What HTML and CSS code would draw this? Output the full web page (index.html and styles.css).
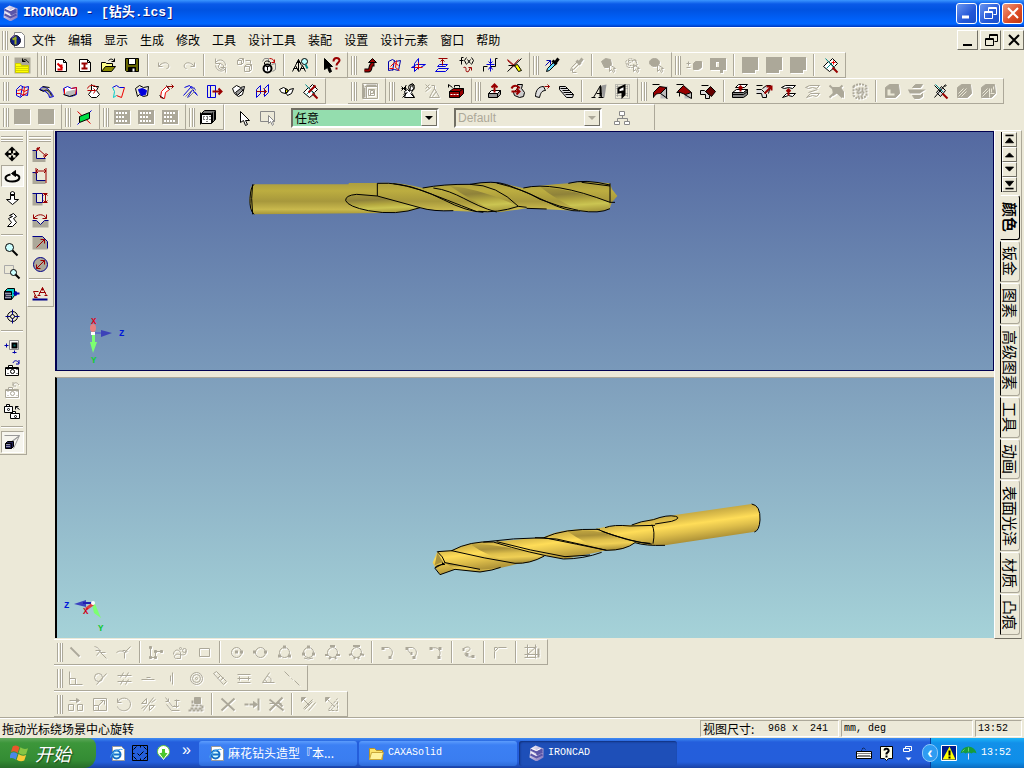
FILE: index.html
```html
<!DOCTYPE html>
<html lang="zh-CN">
<head>
<meta charset="utf-8">
<title>IRONCAD - [钻头.ics]</title>
<link rel="stylesheet" href="styles.css">
</head>
<body>
<svg class="defs" aria-hidden="true">
  <defs>
    <linearGradient id="cube" x1="0" y1="0" x2="1" y2="1"><stop offset="0" stop-color="#fff"/><stop offset="1" stop-color="#7868b8"/></linearGradient>
    <symbol id="logo" viewBox="-.5 -.5 16 16"><path stroke="none" fill="url(#cube)" d="M7 0l8 3v9l-7 4-7-4 1-9z"/><path stroke="#5a55a8" stroke-width="2" d="M2 4l6 3 6-3M8 9l6-3M2 9l6 3 6-3"/><path stroke="#fff" d="M3 3l5 2 4-2M3 7l5 3"/></symbol>
    <symbol id="ie" viewBox="-.5 -.5 16 16"><path stroke="#999" fill="#fff" d="M3 1h9l3 3v11H3z"/><circle cx="7" cy="9" r="4" stroke="#1670c8" stroke-width="2" fill="#dff"/><path stroke="#1670c8" stroke-width="2" d="M4 9h7"/><path stroke="#49a8ef" d="M1 12C2 7 8 3 13 4"/></symbol>
    <symbol id="solid" viewBox="0 0 16 16"><path fill="currentColor" stroke="none" d="M0 0h16v13h-3v3H0z"/></symbol>
    <symbol id="grid" viewBox="0 0 16 16"><path fill="currentColor" stroke="none" d="M0 1h16v14H0z"/><path stroke="#fff" stroke-width="2" stroke-dasharray="2 1" d="M2 4h12M2 8h9M2 12h12"/></symbol>
    <symbol id="camera" viewBox="-.5 -.5 16 16"><path fill="#fff" d="M1 7h13v8H1zM4 7V5h4v2"/><circle cx="8" cy="11" r="2"/><path d="M3 9h1M12 9h1M3 13h1M12 13h1M1 8h13"/></symbol>
    <symbol id="block" viewBox="-.5 -.5 16 16"><path fill="#aca899" stroke="none" d="M0 4h4v8h9v4H0z"/><path stroke="#000080" d="M0 4h4v8h9"/></symbol>
    <symbol id="circle" viewBox="-.5 -.5 16 16"><circle cx="8" cy="8" r="5"/></symbol>
  </defs>
</svg>
<div class="window">
  <header class="titlebar">
    <svg class="i"><use href="#logo"/></svg>
    <h1>IRONCAD - [钻头.ics]</h1>
    <div class="winbtns">
      <button aria-label="最小化"><svg class="i" viewBox="0 0 16 16"><path stroke-width="3" d="M3 12h7"/></svg></button>
      <button aria-label="还原"><svg class="i" viewBox="-.5 -.5 16 16"><path d="M6 6V2h8v7h-3M6 3h8M2 6h8v7H2zM2 7h8"/></svg></button>
      <button class="close" aria-label="关闭"><svg class="i" viewBox="0 0 16 16"><path stroke-width="2" d="M3 3l10 10M13 3L3 13"/></svg></button>
    </div>
  </header>
  <nav class="menubar">
    <i class="grip"></i>
    <svg class="i doc" viewBox="-.5 -.5 16 16"><path fill="#fff" stroke="#888" d="M5 0h7l3 3v12H5z"/><circle cx="6" cy="8" r="5" fill="#0c1a80" stroke="#112"/><path stroke="#9a2" stroke-width="2" d="M6 4v8M3 7l4-2"/><path stroke="#a8d" d="M2 5l3-2"/></svg>
    <button>文件</button><button>编辑</button><button>显示</button><button>生成</button><button>修改</button><button>工具</button><button>设计工具</button><button>装配</button><button>设置</button><button>设计元素</button><button>窗口</button><button>帮助</button>
    <div class="mdibtns">
      <button aria-label="最小化窗口"><svg class="i" viewBox="0 0 16 16"><path stroke-width="2" d="M3 13h9"/></svg></button>
      <button aria-label="还原窗口"><svg class="i" viewBox="-.5 -.5 16 16"><path d="M6 6V2h8v7h-3M6 3h8M2 6h8v7H2zM2 7h8"/></svg></button>
      <button aria-label="关闭窗口"><svg class="i" viewBox="0 0 16 16"><path stroke-width="2" d="M3 3l10 10M13 3L3 13"/></svg></button>
    </div>
  </nav>

  <div class="row">
    <div class="tb"><i class="grip"></i>
      <button aria-label="场景"><svg class="i" viewBox="-.5 -.5 16 16"><path stroke="none" fill="#aca899" d="M0 0h16v16H0z"/><path stroke="#cc0" fill="#ff0" d="M1 6h5l1 2h7v7H1z"/><path stroke="#aa0" stroke-dasharray="1 1" d="M2 9h11M2 11h11M2 13h11"/><path d="M8 4c2-3 4-2 6 1M8 1v3h3"/></svg></button>
    </div>
    <div class="tb"><i class="grip"></i>
      <button aria-label="新建"><svg class="i" viewBox="-.5 -.5 16 16"><path fill="#fff" d="M3 2h8l3 3v9H3zM11 2v3h3"/><path stroke="#d00" stroke-width="2" d="M5 6l5 5M9 7v5H5"/></svg></button>
      <button aria-label="新建图纸"><svg class="i" viewBox="-.5 -.5 16 16"><path fill="#fff" d="M3 2h8l3 3v9H3zM11 2v3h3"/><path stroke="#900" stroke-width="2" d="M5 6h6M5 11h6M8 6v5"/></svg></button>
      <button aria-label="打开"><svg class="i" viewBox="-.5 -.5 16 16"><path fill="#ff8" d="M1 14V5h4l1 1h6v3"/><path fill="#880" d="M1 14l4-5h10l-4 5z"/><path d="M8 3c2-2 4-2 6 1M14 1v3h-3"/></svg></button>
      <button aria-label="保存"><svg class="i" viewBox="-.5 -.5 16 16"><path fill="#660" d="M1 1h13v13H2l-1-1z"/><path fill="#fff" d="M4 1h7v6H4z"/><path fill="#000" d="M4 10h7v4H4z"/><path stroke="#fff" stroke-width="2" d="M9 11v3"/></svg></button>
      <i class="sep"></i>
      <button disabled aria-label="撤消"><svg class="i" viewBox="-.5 -.5 16 16"><path d="M2 5v4h4M2 9c3-4 8-5 10-2 1 2 0 4-2 4"/></svg></button>
      <button disabled aria-label="重做"><svg class="i" viewBox="-.5 -.5 16 16"><path d="M14 5v4h-4M14 9C11 5 6 4 4 7c-1 2 0 4 2 4"/></svg></button>
      <i class="sep"></i>
      <button disabled aria-label="更新"><svg class="i" viewBox="-.5 -.5 16 16"><path d="M3 1v5h5M3 5c4-5 10-2 10 3M13 15v-5H8M13 11c-4 5-9 2-10-3M6 8l2-2 3 2v3l-3 1-2-2z"/></svg></button>
      <button disabled aria-label="复制"><svg class="i" viewBox="-.5 -.5 16 16"><path d="M1 3l2-2h4v4L5 7H1zM1 3h4v4M5 3l2-2M8 9l2-2h5v5l-2 2H8zM8 9h5v5M13 9l2-2M9 3h5v3"/></svg></button>
      <button aria-label="锁定"><svg class="i" viewBox="-.5 -.5 16 16"><path stroke="#888" d="M2 4l2-3h4v4M11 7l4-1v6l-3 2"/><circle cx="7" cy="11" r="4" fill="#fff" stroke-width="2"/><path d="M4 7V5c1-2 4-2 6 0v2M7 9v4M5 9h4"/><path stroke="#b00" d="M9 1c3 0 4 1 5 4M11 5h3V2"/></svg></button>
      <i class="sep"></i>
      <button aria-label="查找"><svg class="i" viewBox="-.5 -.5 16 16"><path d="M0 14l3-6 3 6M1 11h4M7 14l3-6 3 6M8 11h4M3 8l3-6 3 6M4 5h4M6 2v12"/><circle cx="12" cy="4" r="3" fill="#bff"/><path stroke="#088" stroke-width="2" d="M13 7l2 4"/></svg></button>
      <i class="sep"></i>
      <button aria-label="帮助"><svg class="i" viewBox="-.5 -.5 16 16"><path fill="#000" d="M0 1l8 8H5l2 5-2 1-2-5-3 2z"/><path stroke="#900" stroke-width="2" d="M9 4c0-5 6-4 6-1 0 2-3 2-3 5M12 10v2"/></svg></button>
    </div>
    <div class="tb"><i class="grip"></i>
      <button aria-label="路径"><svg class="i" viewBox="-.5 -.5 16 16"><path stroke-width="4" d="M2 13h4c3 0 1-6 4-6V4"/><path stroke="#900" stroke-width="2" d="M2 13h4c3 0 1-6 4-6V4"/><path fill="#900" d="M6 5l4-4 4 4z"/></svg></button>
      <button aria-label="草图"><svg class="i" viewBox="-.5 -.5 16 16"><path stroke="#00a" d="M2 4l4-2 3 2 5-1-2 10-4-1-6 1zM8 3L6 13"/><path stroke="#e00" d="M4 9l4-4 4 3M10 3l-1 7 4 3M3 11h4"/></svg></button>
      <button aria-label="三维参考"><svg class="i" viewBox="-.5 -.5 16 16"><path stroke="#00d" d="M1 10l5-3h9l-5 3zM8 1v9l-4 4V6z"/><path stroke="#d00" d="M4 10h8M8 5v7"/></svg></button>
      <button aria-label="偏移"><svg class="i" viewBox="-.5 -.5 16 16"><path stroke="#00d" d="M1 14l3-3h10l-3 3zM3 9l2-2h8l-2 2z"/><path stroke="#900" d="M4 1h9M8 2v6M6 4l2-2 2 2"/></svg></button>
      <button aria-label="函数"><svg class="i" viewBox="-.5 -.5 16 16"><path d="M5 0H3v7M1 3h4M8 0L6 3l2 4M9 2l3 4M12 2L9 6M13 0l2 3-2 4"/><path stroke="#900" d="M5 10c5-2 0 6 5 4l2-4M10 10h3v3"/></svg></button>
      <button aria-label="拟合"><svg class="i" viewBox="-.5 -.5 16 16"><path d="M1 14V9h4M8 9h5V1h2"/><path stroke="#00d" d="M8 1v13M4 7h8M6 4l2 2 2-2M6 12l2-3 2 3"/></svg></button>
      <button aria-label="修剪"><svg class="i" viewBox="-.5 -.5 16 16"><path stroke="#900" d="M1 2l8 7M12 2L4 11M1 3l7 6"/><path d="M1 14L15 1M2 8h9"/><path fill="#ff0" d="M8 8l3-1 4 6-3 1z"/></svg></button>
    </div>
    <div class="tb"><i class="grip"></i>
      <button aria-label="吸管"><svg class="i" viewBox="-.5 -.5 16 16"><path fill="#6df" d="M2 14l1-3 6-6 2 2-6 6z"/><path stroke-width="3" d="M8 3l4 4M11 5l3-4"/><path stroke="#00a" d="M2 3h4v4M6 3L1 8"/></svg></button>
      <button disabled aria-label="填充"><svg class="i" viewBox="-.5 -.5 16 16"><path d="M2 13l1-3 6-6 2 2-6 6z"/><path stroke-width="3" d="M8 3l4 4M11 5l3-4"/><path d="M4 11v4h4"/></svg></button>
      <i class="sep"></i>
      <button disabled aria-label="选择零件"><svg class="i" viewBox="-.5 -.5 16 16"><path fill="currentColor" d="M1 4l4-3 5 1 1 5-3 3H4z"/><path d="M9 7v7l2-2 2 3 1-1-1-3h2z"/></svg></button>
      <button disabled aria-label="选择组件"><svg class="i" viewBox="-.5 -.5 16 16"><path stroke-dasharray="2 1" d="M1 4l4-3 5 1 3 5-5 3H3zM4 3h8v5H4zM2 7l9-5"/><path d="M9 7v7l2-2 2 3 1-1-1-3h2z"/></svg></button>
      <button disabled aria-label="选择面"><svg class="i" viewBox="-.5 -.5 16 16"><ellipse cx="6" cy="5" rx="5" ry="4" fill="currentColor"/><path d="M9 7v7l2-2 2 3 1-1-1-3h2z"/></svg></button>
    </div>
    <div class="tb"><i class="grip"></i>
      <button disabled aria-label="加减"><svg class="i" viewBox="-.5 -.5 16 16"><path d="M0 6h4M2 4v4M0 10h4"/><path fill="currentColor" d="M7 6l2-2h6v6l-3 2H7z"/></svg></button>
      <button disabled aria-label="空心"><svg class="i" viewBox="0 0 16 16"><path fill="currentColor" stroke="none" fill-rule="evenodd" d="M0 1h16v12h-3v3h-3v-3H0zM6 5v5h3V5z"/></svg></button>
      <i class="sep"></i>
      <button disabled aria-label="合并"><svg class="i"><use href="#solid"/></svg></button>
      <button disabled aria-label="求差"><svg class="i"><use href="#solid"/></svg></button>
      <button disabled aria-label="求交"><svg class="i"><use href="#solid"/></svg></button>
      <i class="sep"></i>
      <button aria-label="编辑面"><svg class="i" viewBox="-.5 -.5 16 16"><path fill="#fff" d="M1 9l5-5 6 6-5 4zM7 4l3-3 5 5-3 3"/><path stroke="#088" d="M3 1l11 12M4 11l6-6"/><path stroke="#900" stroke-width="2" d="M10 10l5 5"/><path stroke="#e00" d="M11 3v4M9 5h4"/></svg></button>
    </div>
  </div>

  <div class="row">
    <div class="tb"><i class="grip"></i>
      <button aria-label="网格面"><svg class="i" viewBox="-.5 -.5 16 16"><path stroke="#00d" d="M2 6l4-4 4 2 4-1-1 9-4-1-3 3-4-2zM8 3L6 13"/><path stroke="#e00" d="M3 7l4-1 3 2 4-2M2 10h4l3 2 4-3M10 3L9 12"/></svg></button>
      <button aria-label="放样面"><svg class="i" viewBox="-.5 -.5 16 16"><path fill="#aca899" stroke="#00d" d="M1 6c3-4 8-4 14 7l-4 1C10 9 6 7 1 6z"/><path d="M1 6l4 2c3-3 6-1 8 4M4 3l7 1"/></svg></button>
      <button aria-label="直纹面"><svg class="i" viewBox="-.5 -.5 16 16"><path fill="#fff" stroke="#00d" d="M1 5l4-2 4 2 5-1v7l-5 2-7-2z"/><path fill="#bbb" stroke="none" d="M4 8l9-2v5l-4 2-7-2z"/><path stroke="#e00" d="M9 5l5-1-1 7M2 5v6"/><path d="M1 11l6 2 6-2"/></svg></button>
      <button aria-label="旋转面"><svg class="i" viewBox="-.5 -.5 16 16"><path fill="#fff" d="M5 1l2 2h5l-2 4 3 4-3 3H5l-3-3 3-4z"/><path stroke="#b00" d="M1 5c1-4 8-4 9-1M1 7h8M7 5l2 2-2 3"/></svg></button>
      <button aria-label="填充面"><svg class="i" viewBox="-.5 -.5 16 16"><path stroke="#00d" d="M2 4l4-2 3 2h5"/><path stroke="#e00" d="M14 4l-3 10-5-2"/><path stroke="#0cc" d="M6 12l-3 2 1-6-2-4"/></svg></button>
      <button aria-label="修补面"><svg class="i" viewBox="-.5 -.5 16 16"><path d="M1 5l4-3 4 2 5-1-1 9-4 1-4-2-2 2z"/><path fill="#00d" stroke="#00d" d="M4 6l4-1 4 2-1 4-4 1-2-3z"/></svg></button>
      <button aria-label="导向面"><svg class="i" viewBox="-.5 -.5 16 16"><path fill="#fff" stroke="#e00" d="M2 14l1-6 5-5 3 3-4 3-1 6z"/><path d="M1 12l4 3M8 2l3 4"/><path stroke="#900" d="M9 3h6M13 1l2 2-2 2"/></svg></button>
      <button aria-label="延伸面"><svg class="i" viewBox="-.5 -.5 16 16"><path stroke="#00d" d="M2 4l5-2 8 10M5 14l5-8 4 5M1 12l8-9 4 3"/><path stroke="#888" d="M3 13l9-9M6 14l7-7"/></svg></button>
      <button aria-label="偏移面"><svg class="i" viewBox="-.5 -.5 16 16"><path stroke="#00d" d="M1 2h8v12H1zM4 2v12"/><path stroke="#900" stroke-width="2" d="M6 8h8M12 5l3 3-3 3"/></svg></button>
      <button aria-label="裁剪面"><svg class="i" viewBox="-.5 -.5 16 16"><path fill="#fff" d="M2 5l4-3 4 2 4-1-2 8-4 2-4-3z"/><path fill="#999" d="M5 9l5-4 3 1-6 6z"/></svg></button>
      <button aria-label="镜像面"><svg class="i" viewBox="-.5 -.5 16 16"><path stroke="#00d" d="M2 14V6l4-4v8zM10 13V5l4-4v8z"/><path stroke="#900" d="M2 8h10M9 5l3 3-3 3"/></svg></button>
      <button aria-label="缝合面"><svg class="i" viewBox="-.5 -.5 16 16"><path fill="#fff" d="M1 6l4-2 4 2-2 4-4-1zM8 10l3-4 4-1-2 5-4 2z"/><path fill="#ff0" d="M7 6l3 1-3 3z"/></svg></button>
      <button aria-label="编辑曲面"><svg class="i" viewBox="-.5 -.5 16 16"><path fill="#fff" d="M1 9l5-5 6 6-5 4zM7 4l3-3 5 5-3 3"/><path stroke="#088" d="M3 1l11 12M4 11l6-6"/><path stroke="#900" stroke-width="2" d="M13 2L6 9M10 10l5 5"/></svg></button>
    </div>
    <div class="tb gap"><i class="grip"></i>
      <button disabled aria-label="参数"><svg class="i" viewBox="-.5 -.5 16 16"><path d="M0 0h15v15H0zM1 1v14M4 2v13M2 3h13M6 6h6v6H6zM8 12V7h3v3H8"/><path stroke-width="2" d="M2 4v10M4 2h10"/></svg></button>
    </div>
    <div class="tb"><i class="grip"></i>
      <button aria-label="设计"><svg class="i" viewBox="-.5 -.5 16 16"><path fill="#fff" d="M4 8l3-2 2 2 1-5 2-1 1 3-2 4 3 5H4l1-3z"/><path d="M1 3l4 4M1 7l5-5M5 2v5M1 5h5M9 2l3-2 2 2M3 11l4-2M10 10l4 4M2 14l4-4"/><circle cx="11" cy="4" r="3"/></svg></button>
      <button disabled aria-label="装配"><svg class="i" viewBox="-.5 -.5 16 16"><path d="M1 1l4 4M1 5l4-4M7 2h3v4M1 8l5-4M10 5l5 9H5l2-4zM8 13l4-5"/></svg></button>
      <button aria-label="工具箱"><svg class="i" viewBox="-.5 -.5 16 16"><path fill="#900" d="M1 8l4-3h10v5l-4 4H1z"/><path d="M1 8h10l4-3M11 8v6M0 1l4 3M0 1v3M6 4V2h5v2"/><path stroke="#fff" stroke-dasharray="2 1" d="M2 11h8"/></svg></button>
    </div>
    <div class="tb"><i class="grip"></i>
      <button aria-label="拉伸"><svg class="i" viewBox="-.5 -.5 16 16"><path fill="#fff" d="M2 10l3-3h9l-3 3z"/><path fill="#999" d="M2 10h9v4H2zM11 10l3-3v4l-3 3"/><path stroke="#900" stroke-width="2" d="M8 9V2M5 4l3-3 3 3"/></svg></button>
      <button aria-label="旋转"><svg class="i" viewBox="-.5 -.5 16 16"><path fill="#ccc" d="M7 1h5l-1 4 3 4-1 4-4 1-5-2-1-3 4-4z"/><path stroke="#900" stroke-width="2" d="M1 5c2-4 7-3 8 0M1 8h7M6 5l3 3-3 3"/></svg></button>
      <button aria-label="扫描"><svg class="i" viewBox="-.5 -.5 16 16"><path fill="#ddd" d="M1 13c0-6 3-10 8-10l2 4c-4 0-5 3-6 7z"/><path stroke="#900" d="M10 3h5M13 1l2 2-2 2"/></svg></button>
      <button aria-label="放样"><svg class="i" viewBox="-.5 -.5 16 16"><path fill="#ddd" d="M1 3h6l8 8-1 3H8L1 6z"/><path d="M2 5h7M4 7h7M5 9h8M7 11h8"/></svg></button>
      <i class="sep"></i>
      <button aria-label="文字"><svg class="i" viewBox="-.5 -.5 16 16"><path fill="#999" stroke="none" d="M11 2l5-1-2 13h-2z"/><path d="M3 14l7-12 1 12M6 10h5M1 14h4M8 14h5"/><path stroke-width="2" d="M10 3v10"/></svg></button>
      <button aria-label="浮雕"><svg class="i" viewBox="-.5 -.5 16 16"><path stroke="#888" stroke-dasharray="1 1" d="M1 1h14v14H1zM3 2v12M13 2v12M2 3h12M2 12h12M2 5h12M2 10h12"/><path fill="#fff" stroke-width="2" d="M4 5l6-3v9l-2 2V8l-4 1z"/></svg></button>
    </div>
    <div class="tb"><i class="grip"></i>
      <button aria-label="圆角"><svg class="i" viewBox="-.5 -.5 16 16"><path fill="#bbb" stroke="none" d="M8 9l7-7v13h-7z"/><path fill="#900" d="M1 9l6-6 7 1-6 6c-3 0-5 0-7 4z"/><path d="M0 1h7M8 10l7 5M14 4v11"/></svg></button>
      <button aria-label="倒角"><svg class="i" viewBox="-.5 -.5 16 16"><path fill="#bbb" stroke="none" d="M8 10h7v5H8z"/><path fill="#900" d="M1 8l6-6 8 7-6 2z"/><path d="M0 1h7M0 9h3v4M8 11l7 4V9"/></svg></button>
      <button aria-label="拔模"><svg class="i" viewBox="-.5 -.5 16 16"><path fill="#600" d="M5 8l5-5 5 5-4 5z"/><path fill="#ddd" d="M0 7h4l5 5v3H5v-4H0z"/><path d="M1 2h7"/></svg></button>
      <i class="sep"></i>
      <button aria-label="移动面"><svg class="i" viewBox="-.5 -.5 16 16"><path fill="#fff" d="M0 9l4-3h11l-4 3zM3 4l3-3h9l-3 3z"/><path fill="#888" d="M0 9v5h11l4-3V6l-4 3zM0 11h11l4-3"/><path stroke="#900" stroke-width="2" d="M8 8V3M6 5l2-2 2 2"/></svg></button>
      <button aria-label="拉面"><svg class="i" viewBox="-.5 -.5 16 16"><path fill="#ddd" d="M0 6h5l5 5v3H6l-1-4H0M6 5l4-3h4l-2 8"/><path d="M0 2h6"/><path stroke="#900" stroke-width="2" d="M8 10l6-6M10 3h5v4"/></svg></button>
      <button aria-label="匹配面"><svg class="i" viewBox="-.5 -.5 16 16"><path fill="#fff" d="M1 4l4-2h10l-3 3-4-1-4 1zM2 14l4-4h9l-3 3-4-1z"/><path stroke="#900" stroke-width="2" d="M8 12V6M6 8l2-2 2 2"/></svg></button>
      <button disabled aria-label="等距面"><svg class="i" viewBox="-.5 -.5 16 16"><path d="M1 4l4-2h10l-3 3-4-1-4 1zM2 14l4-4h9l-3 3-4-1zM4 9l9-3"/></svg></button>
      <button disabled aria-label="删除面"><svg class="i" viewBox="-.5 -.5 16 16"><path fill="currentColor" d="M4 4h8l3 4v6l-6-5-4 3z"/><path stroke-width="2" d="M1 2l13 12M14 2L1 14"/></svg></button>
      <button disabled aria-label="编辑半径"><svg class="i" viewBox="-.5 -.5 16 16"><path stroke-width="2" stroke-dasharray="2 1" d="M1 3c4-3 10-3 13 0v9c-4 4-10 4-13 0zM3 6h10M4 9h9M6 5h4v8H6z"/></svg></button>
      <i class="sep"></i>
      <button disabled aria-label="抽壳"><svg class="i" viewBox="-.5 -.5 16 16"><path fill="currentColor" d="M1 4l4-3h9l1 9-4 4H1z"/><path fill="#ece9d8" stroke="none" d="M3 6h3v4h4v2H3z"/></svg></button>
      <button disabled aria-label="分割"><svg class="i" viewBox="-.5 -.5 16 16"><path fill="currentColor" d="M4 4l3-3h7l-2 3zM4 12h8l2-2v3l-3 2H6z"/><path stroke-width="2" d="M1 7h13l-3 2H2z"/></svg></button>
      <button aria-label="修剪面"><svg class="i" viewBox="-.5 -.5 16 16"><path fill="#ddd" d="M4 9l5-6 4 4-5 6z"/><path d="M2 2l8 8M13 1L2 14M12 3l2-1"/><path stroke="#088" d="M3 1l8 8"/><path stroke="#900" stroke-width="2" d="M10 10l5 5"/></svg></button>
      <button disabled aria-label="布尔"><svg class="i" viewBox="-.5 -.5 16 16"><path fill="currentColor" d="M1 4l4-3h9l1 9-4 4H1z"/><path stroke="#ece9d8" d="M2 10l5-5M2 13l8-8M5 13l5-5"/></svg></button>
      <button disabled aria-label="加厚"><svg class="i" viewBox="-.5 -.5 16 16"><path fill="currentColor" d="M1 4l4-3h9l1 9-4 4H1z"/><path stroke="#ece9d8" d="M2 10l5-5M2 13l6-6M9 5v9M11 5v4M13 3v3M10 10h4"/></svg></button>
    </div>
  </div>

  <div class="row">
    <div class="tb"><i class="grip"></i>
      <button disabled aria-label="放置"><svg class="i" viewBox="0 0 16 16"><path fill="currentColor" stroke="none" d="M0 0h16v15H0z"/></svg></button>
      <button disabled aria-label="附着"><svg class="i" viewBox="0 0 16 16"><path fill="currentColor" stroke="none" d="M0 0h16v15H0z"/></svg></button>
    </div>
    <div class="tb"><i class="grip"></i>
      <button aria-label="基准面"><svg class="i" viewBox="-.5 -.5 16 16"><path stroke="#d00" d="M1 2l13 12"/><path stroke="#00d" d="M15 1L1 15"/><path fill="#0d4" d="M3 7l10-4v6L3 13z"/></svg></button>
    </div>
    <div class="tb"><i class="grip"></i>
      <button disabled aria-label="线性阵列"><svg class="i"><use href="#grid"/></svg></button>
      <button disabled aria-label="矩形阵列"><svg class="i"><use href="#grid"/></svg></button>
      <button disabled aria-label="圆形阵列"><svg class="i"><use href="#grid"/></svg></button>
    </div>
    <div class="tb"><i class="grip"></i>
      <button aria-label="设计树"><svg class="i" viewBox="-.5 -.5 16 16"><path fill="#777" d="M1 4l3-3h11v9l-4 4"/><path fill="#fff" d="M1 4h10v10H1zM0 3v12M1 5h10"/><path d="M3 7h1M6 7h1M9 7h1M3 10h1M6 10h1M9 10h1M6 12h1M3 8v1M7 8v1M12 3v10M14 2v9"/></svg></button>
    </div>
    <div class="tb selectbar">
      <button aria-label="选择"><svg class="i" viewBox="-.5 -.5 16 16"><path fill="#fff" d="M4 1v11l3-2 2 5 2-1-2-4h4z"/></svg></button>
      <button aria-label="框选"><svg class="i" viewBox="-.5 -.5 16 16"><path stroke="#888" d="M0 1h14v10H0z"/><path fill="#fff" stroke="#888" d="M8 5v8l2-2 2 4 1-1-1-3h2z"/></svg></button>
      <label class="combo pick"><select aria-label="选择类型"><option>任意</option></select><i class="drop"></i></label>
      <label class="combo cfg"><select aria-label="配置" disabled><option>Default</option></select><i class="drop"></i></label>
      <button aria-label="结构"><svg class="i" viewBox="-.5 -.5 16 16"><path stroke="#888" fill="#fff" d="M5 1h5v4H5zM0 11h5v3H0zM10 11h5v3h-5z"/><path stroke="#888" d="M8 5v3M3 11V8h10v3"/></svg></button>
    </div>
  </div>

  <main class="work">
    <aside class="side">
      <div class="vtb"><i class="hgrip"></i>
        <button aria-label="平移"><svg class="i" viewBox="-.5 -.5 16 16"><path fill="#000" stroke="none" d="M7.500 0l4 4h-3v3h-2V4h-3zM7.500 15l4-4h-3V9h-2v2h-3zM0 7.500l4-4v3h3v2H4v3zM15 7.500l-4-4v3H9v2h2v3z"/></svg></button>
        <button class="on" aria-label="旋转视图"><svg class="i" viewBox="-.5 -.5 16 16"><path stroke-width="2" d="M11 6c6 1 5 7-3 7-9 0-9-6-2-7"/><path fill="#000" d="M11 2v6L7 5z"/></svg></button>
        <button aria-label="前后缩放"><svg class="i" viewBox="-.5 -.5 16 16"><path fill="#fff" d="M6 5V2l2-1 2 1v3M6 5h4v4h4l-6 5-6-5h4z"/><path d="M6 4h4"/></svg></button>
        <button aria-label="漫游"><svg class="i" viewBox="-.5 -.5 16 16"><path fill="#fff" d="M5 3l4-2 3 3-3 2 3 4-4 4H3l4-4-3-4 4-2z"/></svg></button>
        <i class="hsep"></i>
        <button aria-label="缩放"><svg class="i" viewBox="-.5 -.5 16 16"><circle cx="5" cy="5" r="4" fill="#cff"/><path stroke-width="2" d="M8 8l5 5"/></svg></button>
        <button aria-label="窗口缩放"><svg class="i" viewBox="-.5 -.5 16 16"><path stroke="#aaa" d="M0 1h9v8H0z"/><circle cx="9" cy="8" r="3" fill="#cff"/><path stroke-width="2" d="M11 10l4 4"/></svg></button>
        <button aria-label="指定面"><svg class="i" viewBox="-.5 -.5 16 16"><path fill="#0cc" d="M0 5l3-3h7v7l-3 4"/><path fill="#335" d="M0 5h7v8H0z"/><path stroke="#fff" stroke-dasharray="1 1" d="M1 7h5M2 9h5M1 11h5"/><path stroke="#00a" stroke-width="2" d="M15 7h-5M12 5l-2 2 2 2"/></svg></button>
        <button aria-label="指定点"><svg class="i" viewBox="-.5 -.5 16 16"><circle cx="8" cy="8" r="5"/><circle cx="8" cy="8" r="2"/><path stroke="#008" d="M8 1v5M8 10v5M1 8h5M10 8h5"/></svg></button>
        <i class="hsep"></i>
        <button aria-label="全屏显示"><svg class="i" viewBox="-.5 -.5 16 16"><path fill="#fff" stroke="#888" d="M5 2h9v9H5z"/><path fill="#066" stroke-width="2" d="M8 5h4v4H8z"/><path stroke="#00a" d="M0 7h4M2 5v4M10 12v3M8 14h4"/></svg></button>
        <button aria-label="保存视向"><svg class="i"><use href="#camera"/><path stroke="#00a" d="M9 3c1-3 4-3 6 0M15 0v4h-3"/></svg></button>
        <button disabled aria-label="恢复视向"><svg class="i"><use href="#camera"/><path d="M9 3c1-3 4-3 6 0M9 0v4h3"/></svg></button>
        <button aria-label="下一视向"><svg class="i" viewBox="-.5 -.5 16 16"><path fill="#fff" d="M0 2h8v6H0zM6 9h9v5H6zM2 2V0h3v2M8 9V7h3v2M15 5l-4-3M11 5V2h3"/><circle cx="4" cy="5" r="1"/><circle cx="11" cy="12" r="1"/></svg></button>
        <i class="hsep"></i>
        <button class="on" aria-label="透视"><svg class="i" viewBox="-.5 -.5 16 16"><path stroke="#999" d="M0 1h15L7 8M15 1L9 14M14 2L4 9"/><path fill="#225" d="M1 9l2-2h6v5l-2 2H1zM1 9h6v5"/><path stroke="#fff" stroke-dasharray="1 1" d="M2 10h4M2 12h4"/></svg></button>
      </div>
      <div class="vtb"><i class="hgrip"></i>
        <button aria-label="智能标注"><svg class="i"><use href="#block"/><path stroke="#900" d="M5 2l9 8M4 5l4-4M12 12l4-4M5 5V2h3M14 7v3h-3"/></svg></button>
        <button aria-label="水平标注"><svg class="i"><use href="#block"/><path stroke="#900" d="M4 0v6M14 0v15M4 3h10M6 1L4 3l2 2M12 1l2 2-2 2"/></svg></button>
        <button aria-label="垂直标注"><svg class="i" viewBox="-.5 -.5 16 16"><path fill="#aca899" stroke="none" d="M0 3h4v9h6v3H0z"/><path stroke="#008" d="M0 3h10v9H4V3"/><path stroke="#900" d="M10 3h5M10 12h5M13 3v9M11 5l2-2 2 2M11 10l2 2 2-2"/></svg></button>
        <button aria-label="角度标注"><svg class="i" viewBox="-.5 -.5 16 16"><path fill="#aca899" stroke="none" d="M0 8h4l4 4 4-4h4v7H0z"/><path stroke="#008" d="M0 8h4l4 4 4-4h4"/><path stroke="#900" d="M1 6C5 1 11 1 14 6M1 2v4h4M14 2v4h-4"/></svg></button>
        <button aria-label="半径标注"><svg class="i" viewBox="-.5 -.5 16 16"><path fill="#aca899" stroke="none" d="M0 2h10l5 5v8H0z"/><path stroke="#008" d="M0 2h10l5 5v7"/><path stroke="#900" d="M4 13l8-8M8 5h4v4"/></svg></button>
        <button aria-label="直径标注"><svg class="i" viewBox="-.5 -.5 16 16"><circle cx="8" cy="8" r="7" fill="#aca899" stroke="#008"/><path stroke="#900" d="M4 12l8-8M8 4h4v4M4 8v4h4"/></svg></button>
        <i class="hsep"></i>
        <button aria-label="文字标注"><svg class="i" viewBox="-.5 -.5 16 16"><path stroke="#900" d="M6 9l4-8 4 8M7 6h6M1 5h5M1 5l3 6M2 9v2h3M5 9h3M12 9h3M10 1v3"/><path stroke="#008" stroke-width="2" d="M0 13h15"/></svg></button>
      </div>
    </aside>
    <div class="center">
      <div class="stage">
        <div class="views">
          <section class="view top" aria-label="侧视图">
            <svg class="drill1" viewBox="0 0 1170 180">
              <defs><linearGradient id="g1" x1="0" y1="0" x2="0" y2="1"><stop offset="0" stop-color="#aa9c3f"/><stop offset=".28" stop-color="#bcad40"/><stop offset=".6" stop-color="#a7983c"/><stop offset=".85" stop-color="#c9b94d"/><stop offset="1" stop-color="#a59538"/></linearGradient>
              <linearGradient id="g2" x1=".3" y1="0" x2=".5" y2="1"><stop offset="0" stop-color="#a3953c"/><stop offset=".3" stop-color="#8f823a"/><stop offset=".55" stop-color="#b4a840"/><stop offset=".75" stop-color="#cbc552"/><stop offset="1" stop-color="#a99b3d"/></linearGradient></defs>
              <path class="fill1" d="M42 43H325l2-4H412Q480 36 548 54 610 42 690 43 760 30 848 54 900 46 985 40 1040 30 1110 40L1116 58 1132 78 1116 97 1108 118Q1070 128 1020 123L860 115Q800 125 740 127L630 122Q580 122 540 114 480 130 430 129L220 131 42 133 32 118 28 90 32 52Z"/>
              <path class="shade1" d="M317 92Q325 110 385 122 470 138 540 113L412 78 350 73Q315 76 317 92z"/>
              <path class="shade1" d="M630 48Q720 55 835 109 800 128 770 126 690 90 630 48z"/>
              <path class="shade1" d="M900 50Q1010 60 1108 97V118Q1070 130 1018 122 950 90 900 50z"/>
              <path class="edge" d="M42 43Q32 50 30 85T42 133M38 43q-6 40 0 90M412 78V40Q480 36 548 62T710 125M460 41q80 12 150 48t120 38M412 78l-62-5Q315 76 317 92 325 110 385 122 470 138 540 113L412 78M540 113q40 12 100 9M548 54Q610 42 690 43T835 109L860 112M580 54C650 62 690 105 770 126M715 124Q770 130 835 109M690 43Q760 30 800 44 860 65 920 95T1020 123M770 39Q850 58 900 88 960 112 1015 121M850 54q90-22 260 43M985 40q50-14 125 5M1110 40V97h15M860 115l60 2M1018 122q60 10 92-6M1025 37l85 11"/>
            </svg>
            <svg class="axis axis1" viewBox="0 0 48 56"><path stroke="#4a4bd0" d="M12 23h8"/><path fill="#3c42b8" stroke="none" d="M19 20l11 3-11 4z"/><path fill="#7cff70" stroke="none" d="M10 25h3v7h2l-4 11-3-11h2z"/><ellipse cx="11" cy="18" rx="3" ry="4" fill="#e88080" stroke="none"/><path fill="#fff" stroke="none" d="M9 22h4v3H9z"/><text x="9" y="14" fill="#e00018">X</text><text x="37" y="26" fill="#0018d8">Z</text><text x="9" y="53" fill="#10d030">Y</text></svg>
          </section>
          <section class="view bottom" aria-label="透视图">
            <svg class="drill2" viewBox="0 0 1050 300">
              <defs><linearGradient id="g3" gradientUnits="userSpaceOnUse" x1="844" y1="62" x2="856" y2="150"><stop offset="0" stop-color="#c4a843"/><stop offset=".2" stop-color="#e0c04c"/><stop offset=".4" stop-color="#ffdd58"/><stop offset=".65" stop-color="#dfbf4b"/><stop offset="1" stop-color="#a98e36"/></linearGradient>
              <linearGradient id="g4" x1=".3" y1="0" x2=".5" y2="1"><stop offset="0" stop-color="#c0a540"/><stop offset=".25" stop-color="#a99039"/><stop offset=".5" stop-color="#dfc04c"/><stop offset=".7" stop-color="#f0d055"/><stop offset="1" stop-color="#a99037"/></linearGradient></defs>
              <path class="fill2" d="M635 105Q690 85 770 74L995 42Q1022 46 1020 90 1018 122 1000 126L735 166H690L645 158Q610 180 560 181L435 207 375 197Q330 220 300 220L240 234 180 246 105 238 60 254 46 232 38 218 52 185 95 181Q150 152 220 155L370 142Q420 115 525 117 580 104 635 105Z"/>
              <path class="shade2" d="M150 162Q240 160 373 198 330 222 290 220 210 205 150 162z"/>
              <path class="shade2" d="M440 122Q560 115 645 158 610 184 560 181 500 165 440 122z"/>
              <path class="shade2" d="M70 215l110 24 62-5-62 12-75-8z"/>
              <path class="edge" d="M995 42Q1022 46 1020 90 1018 122 1003 126M696 104q10 20 3 57M705 102l50-8q30-10 12-15-25-6-67 10-40 5-65 16M555 113q25-10 75-5l75-2M530 117Q630 158 690 160M645 158q30 10 90 8M545 124q100 34 150 38M372 143Q430 115 540 118M372 143q100 20 188 38 55 0 85-23M345 143l65 4Q500 167 560 181M95 182Q150 152 220 156 330 190 430 207q60 0 115-20M230 155Q330 182 435 200l75-5M190 156q90-12 182-13M95 182q100 24 190 38 45 2 88-22M52 185l45-3M52 185Q70 200 75 218L180 238M75 218l-30 16M75 223q-30 2-30 12l15 19 45-16 75 8q40-5 62-14M60 207q10 12 8 18"/>
              <path fill="#aa923b" stroke="none" d="M52 188l17 27-25 11z"/>
            </svg>
            <svg class="axis axis2" viewBox="0 0 48 40"><path fill="#3c42c0" stroke="none" d="M11 10l12-4v7z"/><path stroke="#2020b0" stroke-width="2" d="M20 9h11"/><path fill="#7cff70" stroke="none" d="M29 10h3l6 14-7-5z"/><path stroke="#e04040" stroke-width="3" d="M30 10l-7 5"/><circle cx="30" cy="9" r="2" fill="#fff" stroke="none"/><text x="1" y="14" fill="#0018d8">Z</text><text x="20" y="20" fill="#d00018">X</text><text x="35" y="37" fill="#10c830">Y</text></svg>
          </section>
        </div>
        <aside class="catalog">
          <div class="nav">
            <button aria-label="第一个"><svg class="i" viewBox="0 0 16 16"><path stroke-width="2" d="M3 3h10"/><path fill="#000" d="M3 12h10L8 6z"/></svg></button>
            <button aria-label="向上"><svg class="i" viewBox="0 0 16 16"><path fill="#000" d="M3 11h10L8 6z"/></svg></button>
            <button aria-label="向下"><svg class="i" viewBox="0 0 16 16"><path fill="#000" d="M3 5h10l-5 5z"/></svg></button>
            <button aria-label="最后一个"><svg class="i" viewBox="0 0 16 16"><path stroke-width="2" d="M3 13h10"/><path fill="#000" d="M3 4h10l-5 6z"/></svg></button>
          </div>
          <div class="tabs"><button class="active">颜色</button><button>钣金</button><button>图素</button><button>高级图素</button><button>工具</button><button>动画</button><button>表面光泽</button><button>材质</button><button>凸痕</button></div>
        </aside>
      </div>
      <div class="row">
        <div class="tb"><i class="grip"></i>
          <button disabled aria-label="两点线"><svg class="i" viewBox="-.5 -.5 16 16"><path stroke-width="2" d="M2 3l9 9"/></svg></button>
          <button disabled aria-label="切线"><svg class="i" viewBox="-.5 -.5 16 16"><path d="M2 2c4 1 5 3 6 6h5M3 6h5l-4 5M8 8l6 6"/></svg></button>
          <button disabled aria-label="法线"><svg class="i" viewBox="-.5 -.5 16 16"><path d="M0 8c3-2 5-2 8 0l6-6M8 8v6M6 6h3M8 8l3-1"/></svg></button>
          <i class="sep"></i>
          <button disabled aria-label="折线"><svg class="i" viewBox="-.5 -.5 16 16"><path d="M2 3v10h5V7h7"/><path fill="currentColor" d="M1 2h2v2H1zM1 12h2v2H1zM6 12h2v2H6zM6 6h2v2H6zM12 6h2v2h-2z"/></svg></button>
          <button disabled aria-label="圆弧线"><svg class="i" viewBox="-.5 -.5 16 16"><path d="M1 10c0-5 5-6 7-2v6H4c-4 0-2-6 3-4 4 1 8 0 6-4"/><circle cx="8" cy="4" r="1"/><circle cx="12" cy="6" r="2"/></svg></button>
          <button disabled aria-label="矩形"><svg class="i" viewBox="-.5 -.5 16 16"><path d="M3 4h10v8H3z"/></svg></button>
          <i class="sep"></i>
          <button disabled aria-label="圆心圆"><svg class="i"><use href="#circle"/><path stroke-width="3" d="M7 8h3M12 8h3"/></svg></button>
          <button disabled aria-label="两点圆"><svg class="i"><use href="#circle"/><path stroke-width="3" d="M1 8h3M12 8h3"/></svg></button>
          <button disabled aria-label="三点圆"><svg class="i"><use href="#circle"/><path stroke-width="3" d="M7 3h3M2 12h3M12 12h3"/></svg></button>
          <button disabled aria-label="一切点圆"><svg class="i"><use href="#circle"/><path stroke-width="3" d="M7 3h3M2 10h3M12 10h3"/><path d="M4 14l4 1 5-1"/></svg></button>
          <button disabled aria-label="两切点圆"><svg class="i"><use href="#circle"/><path stroke-width="2" d="M6 2h5M1 11h3M12 11h4M5 15l2-2M12 15l-1-2"/></svg></button>
          <button disabled aria-label="三切点圆"><svg class="i"><use href="#circle"/><path stroke-width="2" d="M5 2h7M1 11l3-1M12 10l4 1M6 15l1-2M11 15l-1-2"/></svg></button>
          <i class="sep"></i>
          <button disabled aria-label="圆弧"><svg class="i" viewBox="-.5 -.5 16 16"><path d="M2 3h6c5 2 5 7 1 10"/><path stroke-width="3" d="M1 4h3M8 13h3"/></svg></button>
          <button disabled aria-label="圆心弧"><svg class="i" viewBox="-.5 -.5 16 16"><path d="M2 3h6c5 2 5 7 1 10M2 4l4 5"/><path stroke-width="3" d="M1 4h3M8 13h3M6 9h2"/></svg></button>
          <button disabled aria-label="三点弧"><svg class="i" viewBox="-.5 -.5 16 16"><path d="M2 4c8-3 12 3 8 9"/><path stroke-width="3" d="M1 4h3M10 4h3M9 13h3"/></svg></button>
          <i class="sep"></i>
          <button disabled aria-label="样条"><svg class="i" viewBox="-.5 -.5 16 16"><path d="M3 4c6-4 9 1 4 3s-2 7 5 5"/><path stroke-width="3" d="M2 5h2M5 10h3M11 12h3"/></svg></button>
          <i class="sep"></i>
          <button disabled aria-label="倒圆"><svg class="i" viewBox="-.5 -.5 16 16"><path d="M2 14V7l4-4h8M2 3v3M2 3h3"/></svg></button>
          <i class="sep"></i>
          <button disabled aria-label="投影"><svg class="i" viewBox="-.5 -.5 16 16"><path d="M0 3h12M0 10h15M0 13h12M3 0v13M11 0v14M3 10l9-8"/><path stroke-width="2" d="M14 4v9"/></svg></button>
        </div>
      </div>
      <div class="row">
        <div class="tb"><i class="grip"></i>
          <button disabled aria-label="垂直"><svg class="i" viewBox="-.5 -.5 16 16"><path d="M1 1v13h13M1 8h6v6"/></svg></button>
          <button disabled aria-label="相切"><svg class="i" viewBox="-.5 -.5 16 16"><circle cx="6" cy="7" r="4"/><path d="M4 14L14 3"/></svg></button>
          <button disabled aria-label="平行"><svg class="i" viewBox="-.5 -.5 16 16"><path d="M1 5h14M1 11h14M4 7l3-5M9 7l3-5M4 14l3-5M9 14l3-5"/></svg></button>
          <button disabled aria-label="水平"><svg class="i" viewBox="-.5 -.5 16 16"><path d="M1 9h13M6 7h4"/></svg></button>
          <button disabled aria-label="竖直"><svg class="i" viewBox="-.5 -.5 16 16"><path d="M8 2v12M6 5v6"/></svg></button>
          <button disabled aria-label="同心"><svg class="i" viewBox="-.5 -.5 16 16"><circle cx="8" cy="8" r="6"/><circle cx="8" cy="8" r="4"/><circle cx="8" cy="8" r="1"/></svg></button>
          <button disabled aria-label="等长"><svg class="i" viewBox="-.5 -.5 16 16"><path d="M1 3l3-2 10 10-3 3zM5 8l3-3M8 10l3-3"/></svg></button>
          <button disabled aria-label="等距"><svg class="i" viewBox="-.5 -.5 16 16"><path d="M1 4h13M1 8h13M1 12h13M3 6v4M12 6v4"/></svg></button>
          <button disabled aria-label="角度"><svg class="i" viewBox="-.5 -.5 16 16"><path d="M14 12H2l7-10M7 6c4 1 4 3 3 6M4 9c2 1 2 2 2 3"/></svg></button>
          <button disabled aria-label="共线"><svg class="i" viewBox="-.5 -.5 16 16"><path d="M0 1l5 5M7 8l1 1M10 10l5 5"/></svg></button>
        </div>
      </div>
      <div class="row">
        <div class="tb"><i class="grip"></i>
          <button disabled aria-label="平移图形"><svg class="i" viewBox="-.5 -.5 16 16"><path d="M0 8h5v6H0zM9 8h5v6H9zM1 4h9"/><path fill="currentColor" d="M8 2l3 2-3 2z"/></svg></button>
          <button disabled aria-label="缩放图形"><svg class="i" viewBox="-.5 -.5 16 16"><path d="M1 2h13v12H1zM1 9h5v5M6 9l5-5M8 4h4v4"/></svg></button>
          <button disabled aria-label="旋转图形"><svg class="i" viewBox="-.5 -.5 16 16"><path d="M1 2v4h4M1 6c2-6 12-6 13 1 0 9-11 9-13 3"/></svg></button>
          <button disabled aria-label="镜像图形"><svg class="i" viewBox="-.5 -.5 16 16"><path d="M1 7l5-5v5zM9 14V9l5 0zM3 14L13 1M1 12l4-3M11 6l4-3"/></svg></button>
          <button disabled aria-label="偏移图形"><svg class="i" viewBox="-.5 -.5 16 16"><path d="M1 1l3 4 4 5h6M2 8l5 6h8M1 5h3V2M12 3v8M10 9l2 2 2-2M10 4h5"/></svg></button>
          <button disabled aria-label="阵列图形"><svg class="i" viewBox="-.5 -.5 16 16"><path fill="currentColor" d="M6 1h6v6H6z"/><path stroke-width="2" stroke-dasharray="3 1" d="M4 4v5h9M2 12h12M0 14h14M14 9v5"/></svg></button>
          <i class="sep"></i>
          <button disabled aria-label="打断"><svg class="i" viewBox="-.5 -.5 16 16"><path stroke-width="2" d="M1 2l13 12M14 2L1 14"/></svg></button>
          <button disabled aria-label="延伸"><svg class="i" viewBox="-.5 -.5 16 16"><path stroke-width="2" stroke-dasharray="4 1" d="M0 8h10"/><path stroke-width="2" d="M14 2v12"/><path fill="currentColor" d="M9 5l4 3-4 3z"/></svg></button>
          <button disabled aria-label="裁剪"><svg class="i" viewBox="-.5 -.5 16 16"><path stroke-width="2" d="M1 3l14 11M14 1L1 14M9 5l5 5"/><path d="M1 7h12"/></svg></button>
          <i class="sep"></i>
          <button disabled aria-label="显示曲线"><svg class="i" viewBox="-.5 -.5 16 16"><path fill="currentColor" d="M1 1h4L1 5z"/><path d="M3 3l6 6M3 12l9-9M4 13l8-8M8 14l7-8"/></svg></button>
          <button disabled aria-label="显示约束"><svg class="i" viewBox="-.5 -.5 16 16"><path fill="currentColor" d="M1 1h4L1 5z"/><path stroke-dasharray="3 1" d="M3 3l8 8M4 13l9-11M13 5v9H4M6 14l8-9"/></svg></button>
        </div>
      </div>
    </div>
  </main>

  <footer class="status"><span class="msg">拖动光标绕场景中心旋转</span><span class="cell size">视图尺寸:&nbsp; <tt>968 x &nbsp;241</tt></span><span class="cell unit"><tt>mm, deg</tt></span><span class="cell clock"><tt>13:52</tt></span></footer>
  <nav class="taskbar">
    <button class="start"><svg viewBox="0 0 20 18"><path fill="#e8572b" d="M3 2q4-2 7 1L8 9Q5 6 1 8z"/><path fill="#86c544" d="M11 3q4 3 8 1l-2 6q-4 2-8-1z"/><path fill="#4a87e8" d="M1 9q4-2 7 1l-2 6q-3-3-7-1z"/><path fill="#f8ca36" d="M9 10q4 3 8 1l-2 6q-4 2-8-1z"/></svg>开始</button>
    <div class="quick">
      <button aria-label="浏览器"><svg class="i"><use href="#ie"/></svg></button>
      <button aria-label="桌面"><svg class="i" viewBox="-.5 -.5 16 16"><path d="M0 0h15v15H0zM0 8h2M13 8h2M8 0v2M8 13v2M5 8l2 2 4-4M4 1L1 4M11 1l3 3M1 11l3 3M14 11l-3 3"/></svg></button>
      <button aria-label="下载"><svg class="i" viewBox="-.5 -.5 16 16"><circle cx="8" cy="6" r="6" fill="#fff" stroke="#6c3"/><path fill="#4ac82c" stroke="#fff" d="M6 3h4v4h3l-5 7-5-7h3z"/></svg></button>
      <span>»</span>
    </div>
    <div class="tasks">
      <button><svg class="i"><use href="#ie"/></svg><span>麻花钻头造型『本...</span></button>
      <button><svg class="i" viewBox="-.5 -.5 16 16"><path fill="#fce36c" stroke="#b8932a" d="M1 3h5l2 2h6v9H1z"/><path fill="#fff29c" stroke="#c9a83b" d="M3 7h12l-2 7H1z"/></svg><tt>CAXASolid</tt></button>
      <button class="current"><svg class="i"><use href="#logo"/></svg><tt>IRONCAD</tt></button>
    </div>
    <div class="lang">
      <svg class="i" viewBox="-.5 -.5 16 16"><path fill="#fff" d="M0 6h15v7H0z"/><path stroke-dasharray="1 1" d="M1 8h14M2 10h12M1 11h14M5 5l2-3 2 2"/></svg>
      <svg class="i" viewBox="-.5 -.5 16 16"><path fill="#ffffe8" d="M2 1h12v12h-4l-2 2-2-2H2z"/><path stroke-width="2" d="M6 5c0-3 5-2 4 1L8 8v1M8 10v2"/></svg>
      <svg class="i mini" viewBox="-.5 -.5 16 16"><path stroke="#fff" d="M5 3V1h6v4H9M3 3h6v3H3z"/><path fill="#fff" stroke="none" d="M5 12h6l-3 3z"/></svg>
    </div>
    <div class="tray">
      <button class="more" aria-label="显示隐藏的图标">‹</button>
      <svg class="i" viewBox="-.5 -.5 16 16"><path fill="#001a88" stroke="#fff" d="M0 0h15v15H0z"/><path fill="#ff0" stroke="none" d="M8 1l6 13H1z"/><path stroke-width="2" d="M8 5v5M8 11v2"/></svg>
      <svg class="i" viewBox="-.5 -.5 16 16"><path fill="#169c3c" stroke="none" d="M0 8q1-6 8-7 7 1 8 7-3-2-5 0-3-2-6 0-2-2-5 0z"/><path stroke="#6bd36b" d="M8 2v4M4 4l-2 2"/><path stroke="#dde" d="M8 8v6"/></svg>
      <tt>13:52</tt>
    </div>
  </nav>
</div>
</body>
</html>
```
FILE: styles.css
```css
* { box-sizing: border-box; }
body {
  margin: 0;
  background: #ece9d8;
  color: #000;
  font: 12px/16px "Noto Sans CJK SC", sans-serif;
}
button { font: inherit; color: inherit; border: 0; padding: 0; margin: 0; background: none; }
tt { font: 10px/16px "Liberation Mono", monospace; white-space: pre; }
.defs { position: absolute; width: 0; height: 0; }
.window { display: flex; flex-direction: column; min-height: 100vh; }
.i {
  display: block;
  flex: none;
  width: 16px;
  height: 16px;
  overflow: visible;
  fill: none;
  stroke: currentColor;
}

/* title bar */
.titlebar {
  display: flex;
  align-items: center;
  gap: 5px;
  height: 27px;
  padding: 0 1px 1px 2px;
  background: linear-gradient(#3b96ff 0, #0a5ae8 4px, #0053e1 10px, #0062fa 20px, #0066ff 24px, #0038bd 100%);
  color: #fff;
}
.titlebar h1 {
  margin: 0;
  font: bold 13px/20px "Liberation Mono", "Noto Sans CJK SC", monospace;
  text-shadow: 1px 1px #0a1883;
}
.winbtns { display: flex; gap: 2px; margin-left: auto; }
.winbtns button {
  display: grid;
  place-items: center;
  width: 21px;
  height: 21px;
  border: 1px solid #fff;
  border-radius: 3px;
  background: linear-gradient(135deg, #6a96f0, #2458d8 60%, #1c4fc8);
}
.winbtns .close { background: linear-gradient(135deg, #f09a7c, #dc4a24 60%, #c03810); }

/* menu bar */
.menubar { display: flex; align-items: center; height: 25px; padding: 0 0 0 2px; border-top: 1px solid #fff; }
.menubar > button { padding: 0 6px; }
.menubar .doc { margin: 0 1px; }
.menubar .grip { margin-right: 0; }
.mdibtns { display: flex; gap: 2px; margin-left: auto; }
.mdibtns button {
  display: grid;
  place-items: center;
  width: 21px;
  height: 20px;
  border: 1px solid;
  border-color: #fff #716f64 #716f64 #fff;
}

/* docked toolbars */
.row { display: flex; height: 26px; }
.tb {
  display: flex;
  align-items: center;
  flex: none;
  padding: 0 3px;
  border-top: 1px solid #fff;
  border-right: 1px solid #aca899;
  border-bottom: 1px solid #aca899;
}
.tb.gap { margin-left: 22px; }
.tb button { display: grid; place-items: center; width: 24px; height: 22px; }
.grip {
  flex: none;
  width: 6px;
  height: 19px;
  margin-right: 1px;
  border: solid #aca899;
  border-width: 0 1px;
  background: linear-gradient(90deg, #fff 1px, #ece9d8 1px 2px, #aca899 2px 3px, #fff 3px);
}
.sep { flex: none; width: 2px; height: 22px; margin: 0 3px; border-left: 1px solid #aca899; border-right: 1px solid #fff; }
button:disabled { color: #aca899; }
button:disabled .i { filter: drop-shadow(1px 1px 0 #fff); }
.selectbar { height: 26px; padding: 0 20px 0 7px; border-left: 1px solid #fff; border-bottom: 0; }
.combo { position: relative; width: 148px; height: 20px; }
.combo.pick { margin: 0 15px 0 11px; }
.combo.cfg { margin-right: 8px; }
.combo select {
  appearance: none;
  width: 100%;
  height: 20px;
  padding: 0 2px;
  border: 2px solid;
  border-color: #716f64 #fff #fff #716f64;
  border-radius: 0;
  background: #94ddae;
  color: #000;
  font: 12px/16px "Noto Sans CJK SC", sans-serif;
  opacity: 1;
}
.combo.cfg select { background: #ece9d8; color: #aca899; font-family: "Liberation Sans", sans-serif; }
.drop {
  position: absolute;
  top: 2px;
  right: 2px;
  display: grid;
  place-items: center;
  width: 16px;
  height: 16px;
  border: 1px solid;
  border-color: #fff #716f64 #716f64 #fff;
  background: #ece9d8;
  pointer-events: none;
}
.drop::after { content: ""; border: 4px solid transparent; border-top-color: #000; border-bottom: 0; }
.cfg .drop::after { border-top-color: #aca899; }

/* work area */
.work { display: flex; flex: 1; min-height: 0; }
.side { display: flex; align-items: flex-start; width: 54px; flex: none; }
.vtb {
  display: flex;
  flex-direction: column;
  align-items: center;
  width: 27px;
  padding: 5px 2px 1px 0;
  border-right: 1px solid #aca899;
  border-bottom: 1px solid #aca899;
  border-top: 1px solid #fff;
}
.vtb + .vtb { border-left: 1px solid #fff; }
.vtb button { display: grid; place-items: center; width: 23px; height: 22px; }
.vtb .on { border: 1px solid; border-color: #aca899 #fff #fff #aca899; background: #f6f5ee; }
.hgrip { width: 22px; height: 6px; margin-bottom: 1px; border: solid #aca899; border-width: 1px 0; background: linear-gradient(#fff 1px, #ece9d8 1px 2px, #aca899 2px 3px, #fff 3px); }
.hsep { width: 22px; height: 2px; margin: 3px 0; border-top: 1px solid #aca899; border-bottom: 1px solid #fff; }
.center { display: flex; flex-direction: column; flex: 1; min-width: 0; }
.stage { display: flex; flex: 1; min-height: 0; }
.views { display: flex; flex-direction: column; gap: 6px; flex: 1; min-width: 0; padding: 1px 0 1px 1px; }
.view { position: relative; overflow: hidden; border-left: 2px solid #000; }
.view.top { flex: 240; border: 1px solid #000050; border-left-width: 2px; background: linear-gradient(#5469a1, #7999ba); }
.view.bottom { flex: 262; border-top: 1px solid #aca899; background: linear-gradient(#7f9fbc, #a5d2d8); }
.view svg { position: absolute; fill: none; }
.drill1 { left: 183px; top: 38px; width: 390px; height: 60px; }
.drill2 { left: 363px; top: 112px; width: 350px; height: 100px; }
.fill1 { fill: url(#g1); }
.shade1 { fill: url(#g2); }
.fill2 { fill: url(#g3); }
.shade2 { fill: url(#g4); }
.edge { stroke: #000; stroke-width: 3; }
.axis { font: bold 9px "Liberation Mono", monospace; }
.axis1 { left: 25px; top: 178px; width: 48px; height: 56px; }
.axis2 { left: 6px; top: 216px; width: 48px; height: 40px; }

/* catalog strip */
.catalog { display: flex; flex-direction: column; width: 28px; margin-right: 2px; flex: none; padding: 1px 2px 3px 5px; border: 1px solid; border-color: #fff #aca899 #716f64 #fff; }
.nav { margin-left: 1px; border-left: 1px solid #000; }
.nav button { display: grid; place-items: center; width: 15px; height: 15px; border: 1px solid; border-color: #fff #716f64 #716f64 #fff; }
.nav .i { width: 13px; height: 13px; }
.tabs { display: flex; flex-direction: column; flex: 1; gap: 1px; padding-top: 3px; }
.tabs button {
  writing-mode: vertical-rl;
  text-orientation: sideways;
  flex: 1 1 auto;
  width: 20px;
  border: 1px solid;
  border-color: #fff #aca899 #aca899 #000;
  border-radius: 0 3px 3px 0;
  font-size: 15px;
  line-height: 18px;
  text-align: center;
}
.tabs .active { min-height: 45px; border-color: #fff #000 #000 #ece9d8; font-weight: bold; }

/* status bar */
.status { display: flex; align-items: center; gap: 2px; height: 21px; padding: 1px 2px 0; border-top: 1px solid #aca899; box-shadow: inset 0 1px #fff; }
.status .msg { flex: 1; }
.cell { display: flex; align-items: center; height: 17px; padding: 0 2px; border: 1px solid; border-color: #aca899 #fff #fff #aca899; white-space: pre; }
.cell.size { width: 139px; justify-content: space-between; padding-right: 10px; }
.cell.unit { width: 132px; }
.cell.clock { width: 47px; }

/* task bar */
.taskbar {
  display: flex;
  align-items: center;
  height: 30px;
  color: #fff;
  background: linear-gradient(#3f8cf3 0, #245edc 4px, #245edb 24px, #1941a5);
}
.start {
  display: flex;
  align-items: center;
  gap: 6px;
  width: 96px;
  height: 30px;
  padding-left: 10px;
  border-radius: 0 8px 12px 0;
  background: linear-gradient(#5fa85c 0, #3c963a 5px, #348c34 22px, #276c29);
  font: italic 18px/26px "Noto Sans CJK SC", sans-serif;
  text-shadow: 1px 1px 1px #1c4a1c;
}
.start svg { width: 19px; height: 18px; }
.taskbar button.start { color: #fff; }
.quick { display: flex; align-items: center; gap: 7px; width: 102px; padding-left: 13px; color: #000; }
.quick span { align-self: flex-start; margin-left: 4px; color: #fff; font: 16px/10px "Liberation Sans", sans-serif; }
.tasks { display: flex; gap: 2px; flex: 1; min-width: 0; padding-left: 1px; }
.tasks button {
  display: flex;
  align-items: center;
  gap: 4px;
  flex: 0 1 158px;
  height: 25px;
  padding-left: 9px;
  border-radius: 3px;
  background: linear-gradient(#5c9cfc, #3c80f4 4px, #3a7df0 20px, #2e6bd8);
  white-space: nowrap;
  overflow: hidden;
}
.tasks .current { background: #1e4fb8; box-shadow: inset 1px 1px 2px #10307c; }
.lang { display: flex; gap: 6px; padding-right: 14px; color: #000; }
.tray {
  display: flex;
  align-items: center;
  gap: 3px;
  width: 94px;
  height: 30px;
  background: linear-gradient(#1cb4f8 0, #1290e9 5px, #0f8ee8 24px, #0a6cc0);
  border-left: 1px solid #083c98;
}
.tray .i { color: #000; }
.tray .more { width: 16px; height: 18px; margin-left: -9px; border-radius: 8px; background: #2f9cf2; border: 1px solid #8cc8fa; font: bold 16px/12px "Liberation Sans", sans-serif; }
.tray tt { margin-left: 2px; }
```
